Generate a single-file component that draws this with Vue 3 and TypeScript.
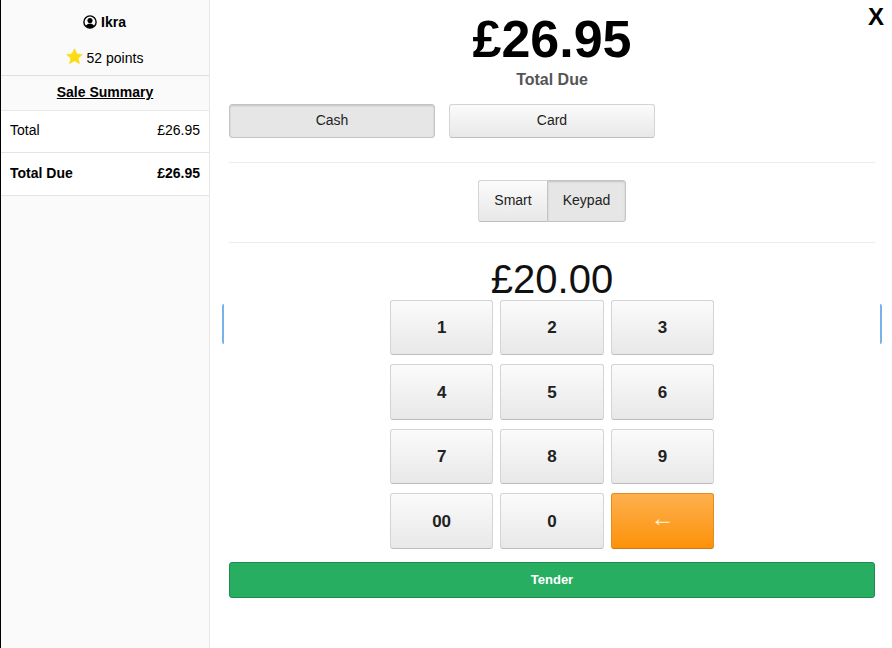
<script setup lang="ts">
const keys = ['1', '2', '3', '4', '5', '6', '7', '8', '9', '00', '0', '←']
</script>

<template>
  <div class="page">
    <aside class="sidebar">
      <div class="customer">
        <svg class="user-icon" viewBox="0 0 16 16" width="14" height="14">
          <circle cx="8" cy="8" r="7" fill="none" stroke="#000" stroke-width="1.6" />
          <circle cx="8" cy="6.2" r="2.9" fill="#000" />
          <path d="M3.2 12.6c.9-2 2.7-3 4.8-3s3.900 1 4.800 3A6.800 6.800 0 0 1 8 15a6.800 6.800 0 0 1-4.800-2.400z" fill="#000" />
        </svg>
        <b>Ikra</b>
      </div>
      <div class="points">
        <svg class="star" viewBox="0 0 24 24" width="17" height="17">
          <path d="M12 1l3.300 7.300 7.700.8-5.800 5.200 1.700 7.700L12 18l-6.900 4 1.700-7.700L1 9.100l7.700-.8z" fill="#fbdc14" stroke="#fbdc14" stroke-linejoin="round" />
        </svg>
        <span>52 points</span>
      </div>
      <h2 class="summary-title">Sale Summary</h2>
      <div class="row"><span>Total</span><span>£26.95</span></div>
      <div class="row strong"><span>Total Due</span><span>£26.95</span></div>
    </aside>

    <main class="main">
      <button class="close">X</button>
      <h1 class="due-amount">£26.95</h1>
      <div class="due-label">Total Due</div>

      <div class="methods">
        <button class="btn method active">Cash</button>
        <button class="btn method">Card</button>
      </div>
      <hr class="rule first" />

      <div class="segment">
        <button class="btn seg">Smart</button>
        <button class="btn seg active">Keypad</button>
      </div>
      <hr class="rule second" />

      <div class="tendered">£20.00</div>
      <div class="keypad-wrap">
        <i class="edge left" />
        <i class="edge right" />
        <div class="keypad">
          <button
            v-for="key in keys"
            :key="key"
            class="btn key"
            :class="{ back: key === '←' }"
          >
            {{ key }}
          </button>
        </div>
      </div>
      <button class="tender">Tender</button>
    </main>
  </div>
</template>

<style scoped>
.page {
  display: flex;
  width: 892px;
  height: 648px;
  overflow: hidden;
  background: #fff;
  color: #000;
  font-family: "Liberation Sans", Arial, sans-serif;
  font-size: 14px;
}

.sidebar {
  box-sizing: border-box;
  width: 210px;
  flex: none;
  background: #fafafa;
  border-left: 1px solid #000;
  border-right: 1px solid #e8e8e8;
}

.customer {
  display: flex;
  align-items: center;
  justify-content: center;
  gap: 4px;
  height: 44px;
  padding-right: 1px;
}

.points {
  box-sizing: border-box;
  display: flex;
  align-items: center;
  justify-content: center;
  gap: 4px;
  height: 32px;
  padding: 0 1px 4px 0;
  border-bottom: 1px solid #e0e0e0;
}

.star {
  margin-top: -3px;
}

.summary-title {
  margin: 0;
  height: 34px;
  line-height: 33px;
  font-size: 14px;
  font-weight: bold;
  text-align: center;
  text-decoration: underline;
  background: #fafafa;
  border-bottom: 1px solid #e8e8e8;
}

.row {
  box-sizing: border-box;
  display: flex;
  justify-content: space-between;
  align-items: center;
  height: 42px;
  padding: 0 9px 3px 9px;
  background: #fff;
  border-bottom: 1px solid #e4e4e4;
}

.row.strong {
  height: 43px;
  font-weight: bold;
}

.main {
  position: relative;
  flex: 1;
  display: flex;
  flex-direction: column;
  align-items: center;
  padding: 0 17px 0 19px;
}

.close {
  position: absolute;
  top: 3px;
  right: 8px;
  padding: 0;
  border: 0;
  background: none;
  font-family: inherit;
  font-size: 24px;
  font-weight: bold;
  line-height: 28px;
  color: #000;
}

.due-amount {
  margin: 11px 0 0;
  font-size: 52px;
  line-height: 56px;
  font-weight: bold;
}

.due-label {
  margin-top: 3px;
  font-size: 16px;
  line-height: 20px;
  font-weight: bold;
  color: #555;
}

.btn {
  box-sizing: border-box;
  padding: 0;
  font-family: inherit;
  color: #222;
  border: 1px solid #d4d4d4;
  border-bottom-color: #bdbdbd;
  border-radius: 3px;
  background: linear-gradient(#fbfbfb, #e8e8e8);
}

.btn.active {
  background: #e6e6e6;
  border-color: #c4c4c4;
  box-shadow: inset 0 1px 2px rgba(0, 0, 0, 0.15);
}

.methods {
  display: flex;
  gap: 14px;
  align-self: flex-start;
  margin-top: 14px;
}

.method {
  width: 206px;
  height: 34px;
  padding-bottom: 2px;
  font-size: 14px;
}

.rule {
  width: 100%;
  height: 1px;
  margin: 0;
  border: 0;
  background: #ececec;
}

.rule.first {
  margin-top: 24px;
}

.rule.second {
  margin-top: 20px;
}

.segment {
  display: flex;
  margin-top: 17px;
}

.seg {
  height: 42px;
  padding-bottom: 2px;
  font-size: 14px;
}

.seg:first-child {
  width: 69px;
  border-radius: 3px 0 0 3px;
  border-right: 0;
}

.seg:last-child {
  width: 79px;
  border-radius: 0 3px 3px 0;
}

.tendered {
  margin-top: 13px;
  font-size: 40px;
  line-height: 46px;
  color: #111;
}

.keypad-wrap {
  position: relative;
  display: flex;
  justify-content: center;
  width: 100%;
  margin-top: -2.300px;
}

.edge {
  position: absolute;
  top: 4px;
  box-sizing: border-box;
  width: 4px;
  height: 40px;
}

.edge.left {
  left: -7px;
  border-left: 2px solid #79b2ea;
  border-radius: 2px 0 0 2px;
}

.edge.right {
  right: -7px;
  border-right: 2px solid #79b2ea;
  border-radius: 0 2px 2px 0;
}

.keypad {
  display: grid;
  grid-template-columns: repeat(3, 103.600px);
  grid-auto-rows: 55.500px;
  gap: 9px 6.800px;
}

.key {
  padding-top: 2px;
  font-size: 17px;
  font-weight: bold;
}

.key.back {
  padding: 0 0 6px;
  color: #fff3dc;
  font-weight: normal;
  font-size: 24px;
  background: linear-gradient(#fdb04f, #fd9209);
  border-color: #e58b1c;
  border-bottom-color: #c97a12;
}

.tender {
  box-sizing: border-box;
  width: 100%;
  height: 36px;
  margin-top: 13.300px;
  padding: 0 0 2px;
  font-family: inherit;
  font-size: 13px;
  font-weight: bold;
  color: #fff;
  background: #27ae60;
  border: 1px solid #1f8c4e;
  border-radius: 3px;
}
</style>
